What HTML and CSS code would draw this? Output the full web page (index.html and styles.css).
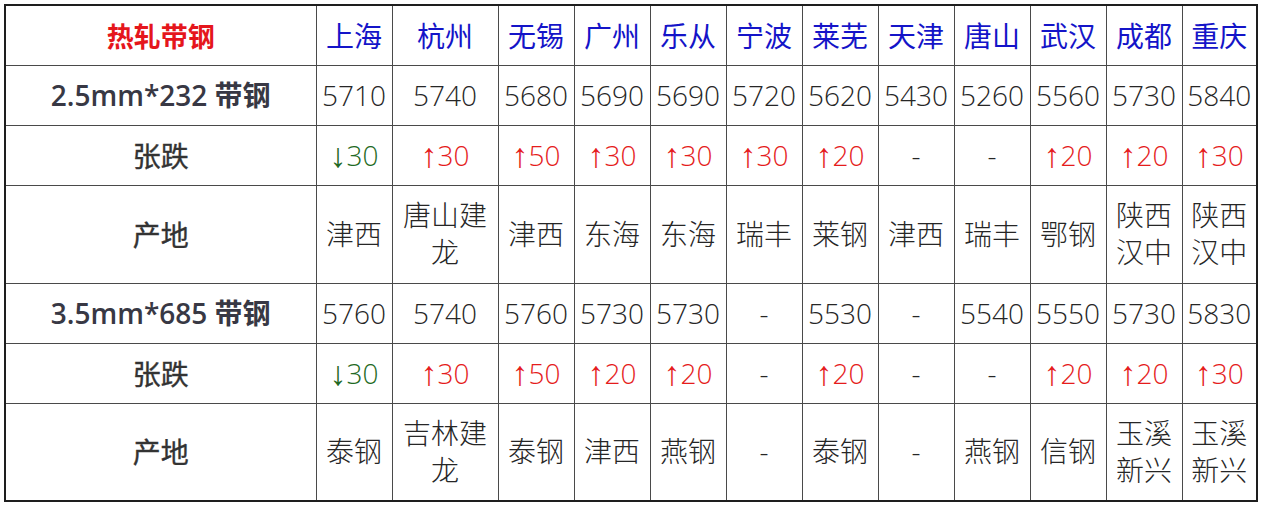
FILE: index.html
```html
<!DOCTYPE html>
<html lang="zh-CN">
<head>
<meta charset="utf-8">
<title>热轧带钢</title>
<link rel="stylesheet" href="styles.css">
</head>
<body>
<table class="price">
  <colgroup>
    <col class="c-label">
    <col class="c-city">
    <col class="c-wide">
    <col class="c-city"><col class="c-city"><col class="c-city"><col class="c-city">
    <col class="c-city"><col class="c-city"><col class="c-city"><col class="c-city"><col class="c-city">
  </colgroup>
  <tr class="r-short">
    <th class="title">热轧带钢</th>
    <th class="city">上海</th><th class="city">杭州</th><th class="city">无锡</th><th class="city">广州</th><th class="city">乐从</th><th class="city">宁波</th><th class="city">莱芜</th><th class="city">天津</th><th class="city">唐山</th><th class="city">武汉</th><th class="city">成都</th><th class="city">重庆</th>
  </tr>
  <tr class="r-short">
    <th class="label">2.5mm*232 带钢</th>
    <td>5710</td><td>5740</td><td>5680</td><td>5690</td><td>5690</td><td>5720</td><td>5620</td><td>5430</td><td>5260</td><td>5560</td><td>5730</td><td>5840</td>
  </tr>
  <tr class="r-short">
    <th class="label sub">张跌</th>
    <td class="down"><span class="arr">↓</span>30</td><td class="up"><span class="arr">↑</span>30</td><td class="up"><span class="arr">↑</span>50</td><td class="up"><span class="arr">↑</span>30</td><td class="up"><span class="arr">↑</span>30</td><td class="up"><span class="arr">↑</span>30</td><td class="up"><span class="arr">↑</span>20</td><td>-</td><td>-</td><td class="up"><span class="arr">↑</span>20</td><td class="up"><span class="arr">↑</span>20</td><td class="up"><span class="arr">↑</span>30</td>
  </tr>
  <tr class="r-tall">
    <th class="label sub">产地</th>
    <td>津西</td><td>唐山建龙</td><td>津西</td><td>东海</td><td>东海</td><td>瑞丰</td><td>莱钢</td><td>津西</td><td>瑞丰</td><td>鄂钢</td><td>陕西汉中</td><td>陕西汉中</td>
  </tr>
  <tr class="r-short">
    <th class="label">3.5mm*685 带钢</th>
    <td>5760</td><td>5740</td><td>5760</td><td>5730</td><td>5730</td><td>-</td><td>5530</td><td>-</td><td>5540</td><td>5550</td><td>5730</td><td>5830</td>
  </tr>
  <tr class="r-short">
    <th class="label sub">张跌</th>
    <td class="down"><span class="arr">↓</span>30</td><td class="up"><span class="arr">↑</span>30</td><td class="up"><span class="arr">↑</span>50</td><td class="up"><span class="arr">↑</span>20</td><td class="up"><span class="arr">↑</span>20</td><td>-</td><td class="up"><span class="arr">↑</span>20</td><td>-</td><td>-</td><td class="up"><span class="arr">↑</span>20</td><td class="up"><span class="arr">↑</span>20</td><td class="up"><span class="arr">↑</span>30</td>
  </tr>
  <tr class="r-tall">
    <th class="label sub">产地</th>
    <td>泰钢</td><td>吉林建龙</td><td>泰钢</td><td>津西</td><td>燕钢</td><td>-</td><td>泰钢</td><td>-</td><td>燕钢</td><td>信钢</td><td>玉溪新兴</td><td>玉溪新兴</td>
  </tr>
</table>
</body>
</html>
```

FILE: styles.css
```css
html, body {
  margin: 0;
  padding: 0;
  background: #ffffff;
}

body {
  padding: 4px 0 0 4px;
  font-family: "Open Sans", "Noto Sans CJK SC", sans-serif;
}

.price {
  border-collapse: collapse;
  table-layout: fixed;
  width: 1254px;
  border: 2px solid #1e1e1e;
}

.c-label { width: 311px; }
.c-city { width: 76px; }
.c-wide { width: 106px; }

.price th,
.price td {
  border: 1px solid #4a4a4a;
  padding: 0 1px;
  text-align: center;
  vertical-align: middle;
  font-size: 28px;
  font-weight: 300;
  line-height: 37px;
  color: #262626;
  overflow: hidden;
  white-space: normal;
}

.r-short { height: 60px; }
.r-tall { height: 98px; }

.price th.title {
  color: #e5161c;
  font-family: "Noto Sans CJK SC", sans-serif;
  font-weight: 700;
  font-size: 27px;
}

.price th.city {
  color: #1414c8;
  font-family: "Noto Sans CJK SC", sans-serif;
  font-weight: 400;
  font-size: 28px;
}

.price th.label {
  color: #383844;
  font-weight: 600;
  font-size: 28px;
}

.price th.label.sub {
  font-family: "Noto Sans CJK SC", sans-serif;
  font-weight: 400;
  font-size: 28px;
  color: #333333;
  -webkit-text-stroke: 0.35px #333333;
}

.arr {
  font-family: "Liberation Sans", sans-serif;
  font-size: 34px;
  line-height: 1;
  vertical-align: -1px;
}

.price td.up { color: #e51c1c; }
.price td.down { color: #1f6a24; }
```
